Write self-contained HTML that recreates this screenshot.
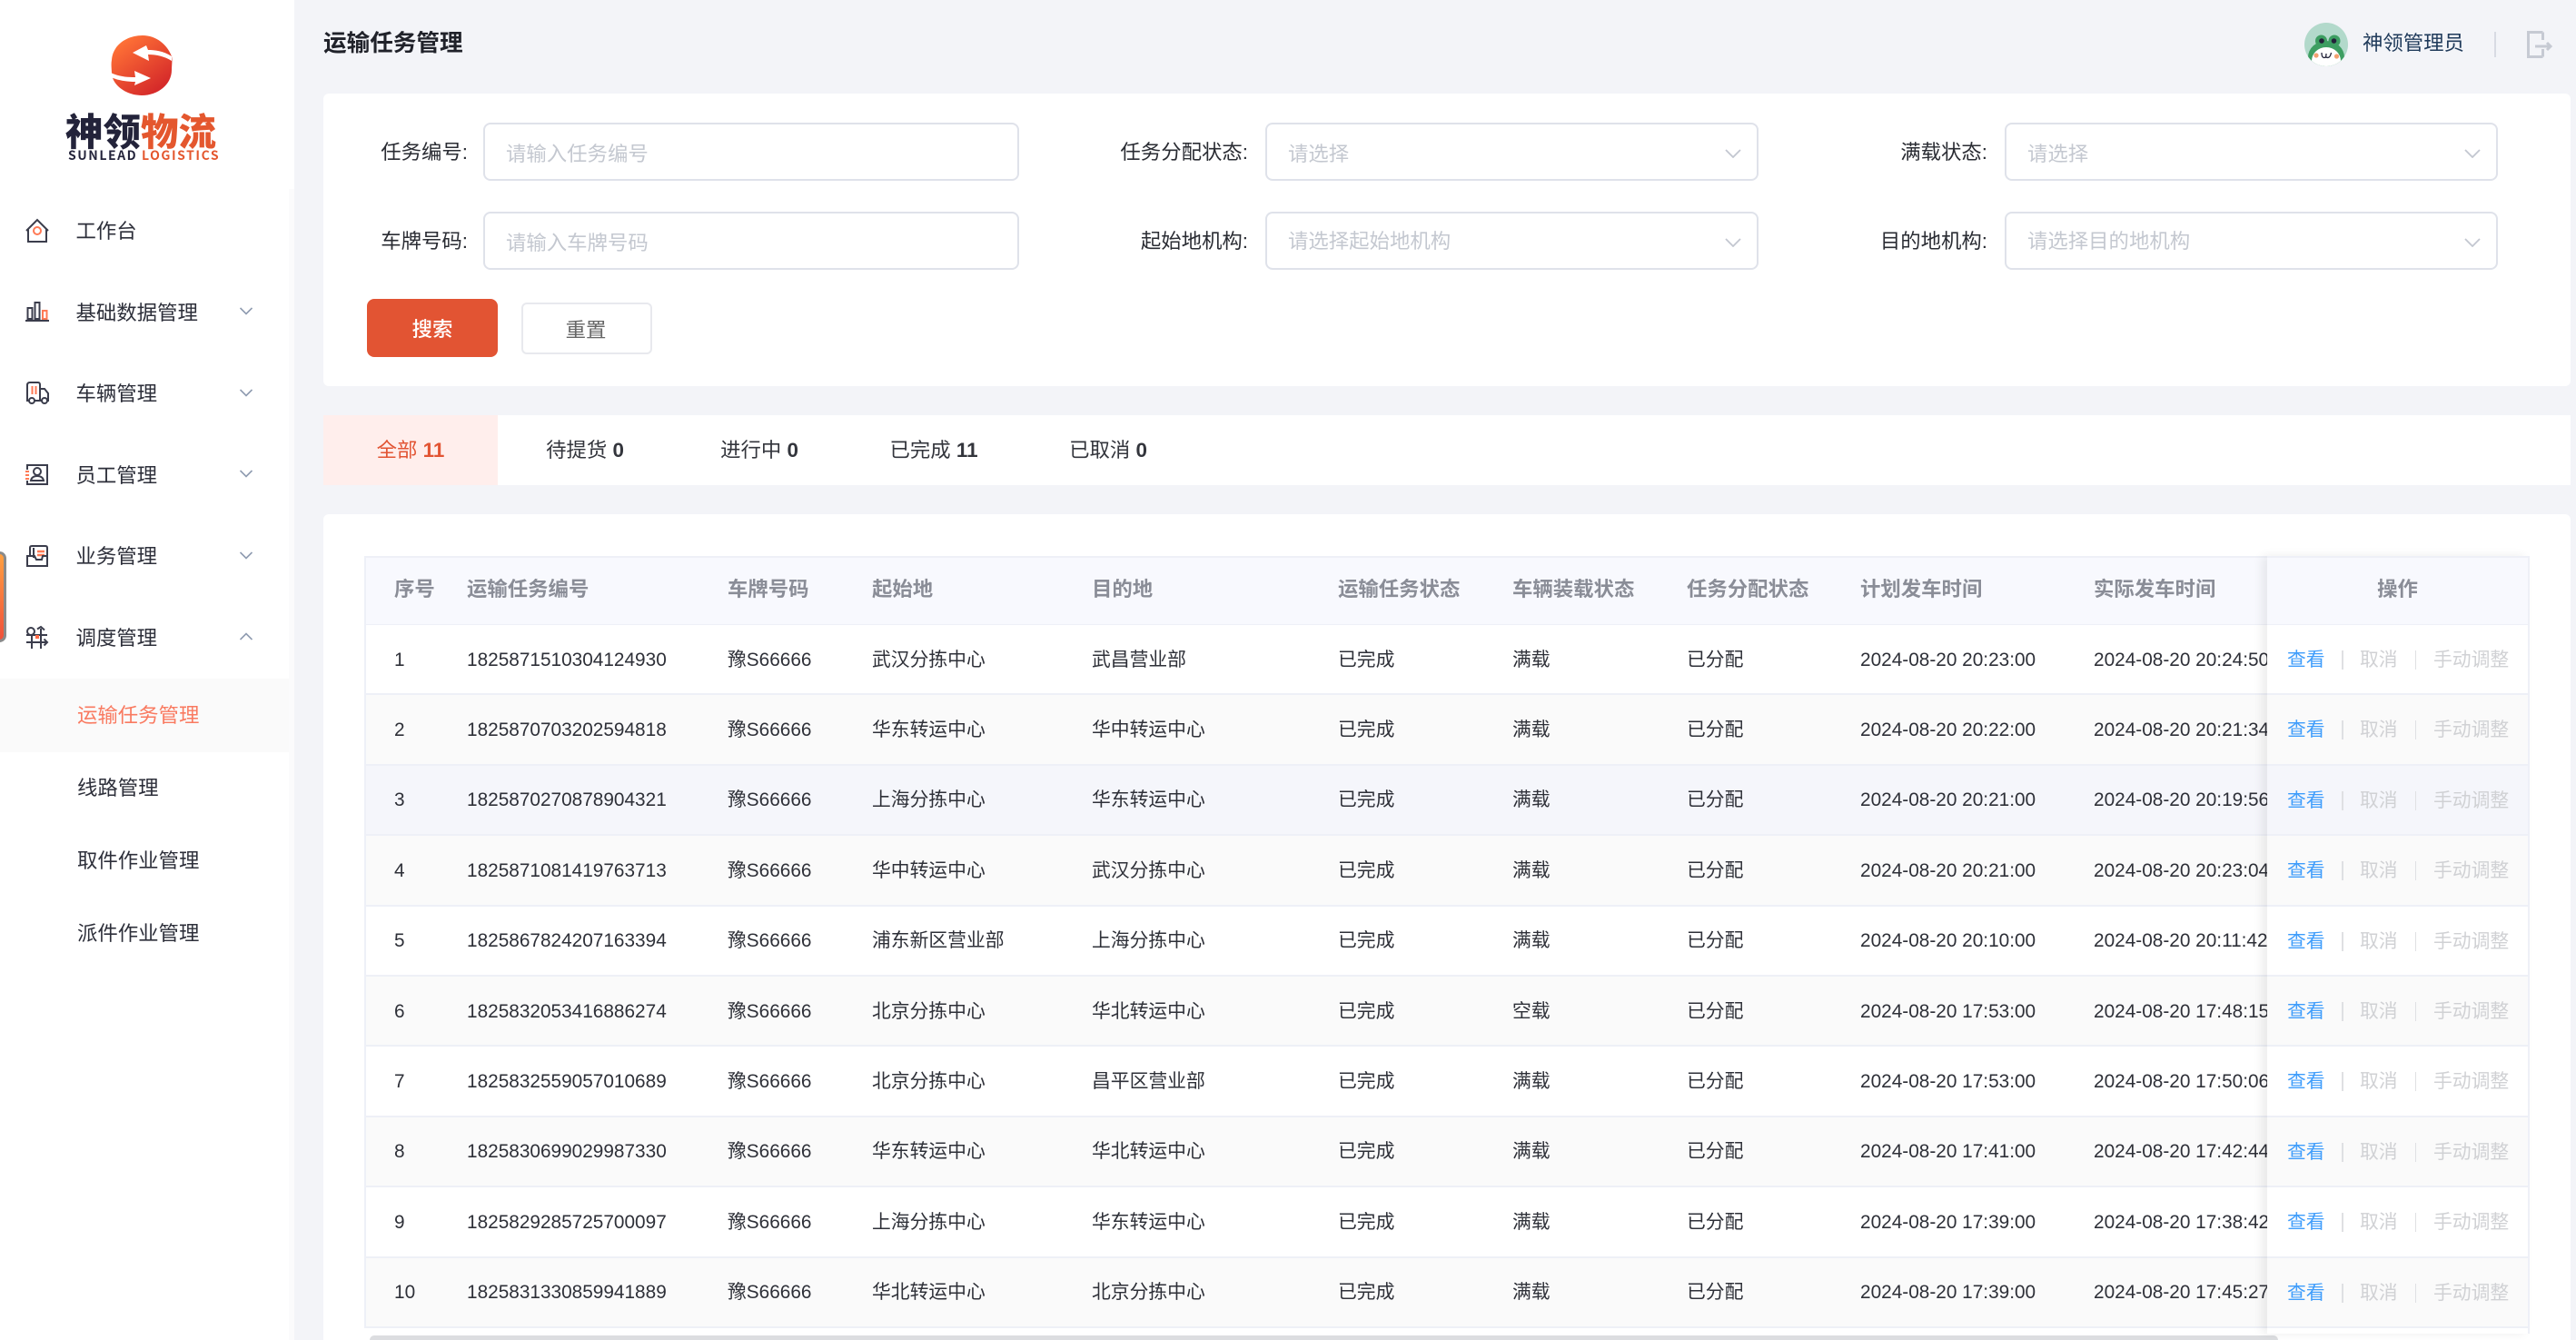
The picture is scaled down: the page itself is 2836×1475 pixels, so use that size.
<!DOCTYPE html>
<html lang="zh-CN"><head><meta charset="utf-8"><title>运输任务管理</title>
<style>
*{box-sizing:border-box}
html,body{margin:0;padding:0;width:2836px;height:1475px;overflow:hidden;background:#f3f4f8;font-family:"Liberation Sans","Noto Sans CJK SC",sans-serif;color:#2a2c33}
.a{position:absolute}
.t{position:absolute;white-space:nowrap;font-size:22.4px;height:40px;line-height:40px}
.card{position:absolute;background:#fff;border-radius:6px}
.in{position:absolute;background:#fff;border:2px solid #dfe2ea;border-radius:8px;height:64px}
.ph{color:#c4c8d0}
.lb{text-align:right;width:200px;color:#2a2c33}
.m{color:#2d2f3a;left:83.5px}
.s{color:#2d2f3a;left:85px}
.chev{position:absolute;fill:none;stroke:#8e9bb0;stroke-width:1.6}
.sel{position:absolute;fill:none;stroke:#c3c7d0;stroke-width:1.8}
.tab{position:absolute;top:457px;width:192px;height:77px;line-height:77px;text-align:center;font-size:22.4px;color:#33353c}
.tab b{font-weight:700}
.row,.hd{position:absolute;left:401px;width:2095px;display:grid;grid-template-columns:113px 287px 159px 242px 271px 192px 192px 191px 257px 191px;align-items:center;font-size:20.8px;color:#2e3038;white-space:nowrap;border-bottom:2px solid #eef0f7}
.row{padding-top:2px}
.row span,.hd span{line-height:40px;height:40px}
.row span{overflow:hidden}
.row span:first-child,.hd span:first-child{padding-left:33px}
.hd{top:612px;height:77px;background:#f8f9fe;border-top:2px solid #eef0f7;font-size:22.4px;font-weight:700;color:#8a8d97;padding-bottom:4px}
.w{background:#fff}.z{background:#fafafa}.h{background:#f5f6fb}
.fx{position:absolute;left:2496px;top:612px;width:289px;height:856px;background:#fff;box-shadow:-6px 0 10px rgba(0,0,0,.07);border-right:2px solid #eef0f7}
.fr{position:absolute;left:0;width:287px;height:77.4px;border-bottom:2px solid #eef0f7;font-size:20.8px;white-space:nowrap}
.fr i{font-style:normal;position:absolute;top:0;line-height:78px;color:#d0d1d4}
.fr i.v{left:22px;color:#3f9dfb}
.fr i.c{left:102px}
.fr i.g{left:183px}
.fr u{position:absolute;top:28px;height:21px;background:#dfe0e3}
.fr u.p{left:82px;width:2px}
.fr u.q{left:163px;width:1px}
</style></head><body>

<div class="a" style="left:0;top:0;width:324px;height:1475px;background:#fff"></div>
<div class="a" style="left:318px;top:208px;width:6px;height:1267px;background:#fbfbfc"></div>

<svg class="a" style="left:0;top:0" width="324" height="125" viewBox="0 0 324 125">
<defs><linearGradient id="lg" x1="0.15" y1="0.1" x2="0.75" y2="0.9"><stop offset="0" stop-color="#ff7236"/><stop offset="1" stop-color="#d62b2a"/></linearGradient></defs>
<path fill="url(#lg)" d="M123 66C124 50 139 39 157 39C172 39 184 49 189 62C190 66 189 72 189 77C189 93 174 105 156 105C139 105 124 94 123 81C123 76 122 71 123 66Z"/>
<path fill="#fff" d="M189 62C180 56 170 55 163 55L161 50L146 58L164 67L163 60C172 60 181 62 189 67Z"/>
<path fill="#fff" d="M122 80C130 84 139 85 149 85L148 78L166 86L148 94L149 90C138 90 129 88 122 85Z"/>
</svg>
<div class="t" style="left:72px;top:121px;height:42px;line-height:42px;font-size:41.5px;font-weight:900;color:#23233a;font-family:'Noto Sans CJK SC',sans-serif">神领<span style="color:#e4572e">物流</span></div>
<div class="t" style="left:75px;top:161px;height:20px;line-height:20px;font-size:14px;font-weight:700;letter-spacing:1.55px;color:#23233a;font-family:'Noto Sans CJK SC',sans-serif">SUNLEAD <span style="color:#e4572e">LOGISTICS</span></div>

<svg class="a" style="left:0;top:230px" width="70" height="500" viewBox="0 230 70 500" fill="none" stroke="#3b3d4c" stroke-width="2">
<path d="M29 254L41 242L53 254M31 252V266H51V252"/><circle cx="41" cy="254" r="4" stroke="#ff7a55"/>
<rect x="30.500" y="339" width="5" height="12"/><rect x="38.500" y="333" width="5" height="18"/><rect x="47" y="342" width="4.500" height="9" stroke="#ff7a55"/><path d="M28 353H54"/>
<path d="M32 441H30V424Q30 421 33 421H42Q44 421 44 424V441H38M44 428H49L53 433V441H52M44 441H46"/><circle cx="35" cy="441" r="3"/><circle cx="49" cy="441" r="3"/><path d="M35.500 425V434M39.500 425V434" stroke="#ff7a55"/>
<path d="M30 517V512H52V533H30V529"/><circle cx="41" cy="519" r="4"/><path d="M34 529Q35 524 41 524Q47 524 48 529Z"/><path d="M28 519H32M28 523H32M28 527H32" stroke="#ff7a55"/>
<path d="M33 612V603Q33 601 35 601H50Q52 601 52 603V612M37 603V614"/><path d="M41 607H49M41 611H49" stroke="#ff7a55" stroke-width="2.400"/><path d="M30 612H38L40 616H46L47 612H52V623H30Z"/>
<circle cx="34" cy="695" r="4"/><path d="M35 699V714M45 692V714M29 699H52M29 707H51M41 692.500L45 690L49 693.500M48.500 703.500L52 707L48.500 710.500"/><rect x="39" y="699" width="4" height="4" fill="#ff6a45" stroke="none"/>
</svg>

<div class="t m" style="top:235px">工作台</div>
<div class="t m" style="top:325px">基础数据管理</div>
<div class="t m" style="top:414px">车辆管理</div>
<div class="t m" style="top:504px">员工管理</div>
<div class="t m" style="top:593px">业务管理</div>
<div class="t m" style="top:683px">调度管理</div>
<svg class="chev" style="left:264px;top:338px" width="14" height="9"><path d="M0.500 1L7 7.500L13.500 1"/></svg>
<svg class="chev" style="left:264px;top:428px" width="14" height="9"><path d="M0.500 1L7 7.500L13.500 1"/></svg>
<svg class="chev" style="left:264px;top:517px" width="14" height="9"><path d="M0.500 1L7 7.500L13.500 1"/></svg>
<svg class="chev" style="left:264px;top:607px" width="14" height="9"><path d="M0.500 1L7 7.500L13.500 1"/></svg>
<svg class="chev" style="left:264px;top:696px" width="14" height="9"><path d="M0.500 8L7 1.500L13.500 8"/></svg>

<div class="a" style="left:0;top:747px;width:318px;height:81px;background:#fafafa"></div>
<div class="t s" style="top:768px;color:#f97a60">运输任务管理</div>
<div class="t s" style="top:848px">线路管理</div>
<div class="t s" style="top:928px">取件作业管理</div>
<div class="t s" style="top:1008px">派件作业管理</div>

<div class="a" style="left:-8px;top:607px;width:15px;height:100px;border:3px solid #8a8a8a;border-radius:8px;background:linear-gradient(#ffa040,#f0503a)"></div>

<div class="t" style="left:356px;top:28px;font-size:25.6px;font-weight:700;color:#20222a">运输任务管理</div>
<svg class="a" style="left:2537px;top:25px" width="48" height="48" viewBox="0 0 48 48">
<defs><clipPath id="cp"><circle cx="24" cy="24" r="24"/></clipPath></defs>
<g clip-path="url(#cp)"><rect width="48" height="48" fill="#b2d9cb"/>
<circle cx="18.500" cy="20" r="6.500" fill="#3d9e62"/><circle cx="33" cy="20" r="6.500" fill="#3d9e62"/>
<ellipse cx="24" cy="38" rx="20" ry="18" fill="#3d9e62"/><ellipse cx="24" cy="42" rx="16" ry="15" fill="#fff"/>
<circle cx="19" cy="20" r="2.800" fill="#23233a"/><circle cx="32.500" cy="20" r="2.800" fill="#23233a"/>
<circle cx="13" cy="36" r="2.600" fill="#f2a070"/><circle cx="35.500" cy="37" r="2.600" fill="#f2a070"/>
<path d="M19 33Q19 40 23.500 38Q24 36 24 34M24 38Q28 40 29.500 33" fill="none" stroke="#23233a" stroke-width="1.300"/></g></svg>
<div class="t" style="left:2601px;top:28px;color:#1f3a5a">神领管理员</div>
<div class="a" style="left:2746px;top:35px;width:2px;height:28px;background:#d8dbe3"></div>
<svg class="a" style="left:2780px;top:32px" width="32" height="34" fill="none" stroke="#c6cad3" stroke-width="3"><path d="M19.500 3.500H3.500V30.500H19.500M19.500 3.500V12M19.500 22V30.500"/><path d="M11 19H28M24 15L28 19L24 23"/></svg>

<div class="card" style="left:356px;top:103px;width:2474px;height:322px"></div>
<div class="t lb" style="left:315px;top:148px">任务编号:</div>
<div class="t lb" style="left:315px;top:246px">车牌号码:</div>
<div class="t lb" style="left:1174px;top:148px">任务分配状态:</div>
<div class="t lb" style="left:1174px;top:246px">起始地机构:</div>
<div class="t lb" style="left:1988px;top:148px">满载状态:</div>
<div class="t lb" style="left:1988px;top:246px">目的地机构:</div>
<div class="in" style="left:532px;top:135px;width:590px"></div>
<div class="in" style="left:532px;top:233px;width:590px"></div>
<div class="in" style="left:1393px;top:135px;width:543px"></div>
<div class="in" style="left:1393px;top:233px;width:543px"></div>
<div class="in" style="left:2207px;top:135px;width:543px"></div>
<div class="in" style="left:2207px;top:233px;width:543px"></div>
<div class="t ph" style="left:557px;top:150px">请输入任务编号</div>
<div class="t ph" style="left:557px;top:248px">请输入车牌号码</div>
<div class="t ph" style="left:1418px;top:150px">请选择</div>
<div class="t ph" style="left:1418px;top:246px">请选择起始地机构</div>
<div class="t ph" style="left:2232px;top:150px">请选择</div>
<div class="t ph" style="left:2232px;top:246px">请选择目的地机构</div>
<svg class="sel" style="left:1899px;top:164px" width="18" height="10"><path d="M1 1L9 9L17 1"/></svg>
<svg class="sel" style="left:1899px;top:262px" width="18" height="10"><path d="M1 1L9 9L17 1"/></svg>
<svg class="sel" style="left:2713px;top:164px" width="18" height="10"><path d="M1 1L9 9L17 1"/></svg>
<svg class="sel" style="left:2713px;top:262px" width="18" height="10"><path d="M1 1L9 9L17 1"/></svg>
<div class="a" style="left:404px;top:329px;width:144px;height:64px;background:#e25433;border-radius:8px;color:#fff;font-size:22.4px;font-weight:500;line-height:67px;text-align:center">搜索</div>
<div class="a" style="left:574px;top:333px;width:144px;height:57px;background:#fff;border:2px solid #e8e9ee;border-radius:6px;color:#666;font-size:22.4px;line-height:57px;text-align:center;padding-right:2px">重置</div>

<div class="a" style="left:356px;top:457px;width:2474px;height:77px;background:#fff"></div>
<div class="tab" style="left:356px;background:#ffeeec;color:#e25433">全部 <b>11</b></div>
<div class="tab" style="left:548px">待提货 <b>0</b></div>
<div class="tab" style="left:740px">进行中 <b>0</b></div>
<div class="tab" style="left:932px">已完成 <b>11</b></div>
<div class="tab" style="left:1124px">已取消 <b>0</b></div>

<div class="a" style="left:356px;top:566px;width:2474px;height:909px;background:#fff;border-radius:6px 6px 0 0"></div>

<div class="hd"><span>序号</span><span>运输任务编号</span><span>车牌号码</span><span>起始地</span><span>目的地</span><span>运输任务状态</span><span>车辆装载状态</span><span>任务分配状态</span><span>计划发车时间</span><span>实际发车时间</span></div>

<div class="row w" style="top:688px;height:77.4px"><span>1</span><span>1825871510304124930</span><span>豫S66666</span><span>武汉分拣中心</span><span>武昌营业部</span><span>已完成</span><span>满载</span><span>已分配</span><span>2024-08-20 20:23:00</span><span>2024-08-20 20:24:50</span></div>
<div class="row z" style="top:765.4px;height:77.4px"><span>2</span><span>1825870703202594818</span><span>豫S66666</span><span>华东转运中心</span><span>华中转运中心</span><span>已完成</span><span>满载</span><span>已分配</span><span>2024-08-20 20:22:00</span><span>2024-08-20 20:21:34</span></div>
<div class="row h" style="top:842.8px;height:77.4px"><span>3</span><span>1825870270878904321</span><span>豫S66666</span><span>上海分拣中心</span><span>华东转运中心</span><span>已完成</span><span>满载</span><span>已分配</span><span>2024-08-20 20:21:00</span><span>2024-08-20 20:19:56</span></div>
<div class="row z" style="top:920.2px;height:77.4px"><span>4</span><span>1825871081419763713</span><span>豫S66666</span><span>华中转运中心</span><span>武汉分拣中心</span><span>已完成</span><span>满载</span><span>已分配</span><span>2024-08-20 20:21:00</span><span>2024-08-20 20:23:04</span></div>
<div class="row w" style="top:997.6px;height:77.4px"><span>5</span><span>1825867824207163394</span><span>豫S66666</span><span>浦东新区营业部</span><span>上海分拣中心</span><span>已完成</span><span>满载</span><span>已分配</span><span>2024-08-20 20:10:00</span><span>2024-08-20 20:11:42</span></div>
<div class="row z" style="top:1075px;height:77.4px"><span>6</span><span>1825832053416886274</span><span>豫S66666</span><span>北京分拣中心</span><span>华北转运中心</span><span>已完成</span><span>空载</span><span>已分配</span><span>2024-08-20 17:53:00</span><span>2024-08-20 17:48:15</span></div>
<div class="row w" style="top:1152.4px;height:77.4px"><span>7</span><span>1825832559057010689</span><span>豫S66666</span><span>北京分拣中心</span><span>昌平区营业部</span><span>已完成</span><span>满载</span><span>已分配</span><span>2024-08-20 17:53:00</span><span>2024-08-20 17:50:06</span></div>
<div class="row z" style="top:1229.8px;height:77.4px"><span>8</span><span>1825830699029987330</span><span>豫S66666</span><span>华东转运中心</span><span>华北转运中心</span><span>已完成</span><span>满载</span><span>已分配</span><span>2024-08-20 17:41:00</span><span>2024-08-20 17:42:44</span></div>
<div class="row w" style="top:1307.2px;height:77.4px"><span>9</span><span>1825829285725700097</span><span>豫S66666</span><span>上海分拣中心</span><span>华东转运中心</span><span>已完成</span><span>满载</span><span>已分配</span><span>2024-08-20 17:39:00</span><span>2024-08-20 17:38:42</span></div>
<div class="row z" style="top:1384.6px;height:77.4px"><span>10</span><span>1825831330859941889</span><span>豫S66666</span><span>华北转运中心</span><span>北京分拣中心</span><span>已完成</span><span>满载</span><span>已分配</span><span>2024-08-20 17:39:00</span><span>2024-08-20 17:45:27</span></div>
<div class="a" style="left:401px;top:612px;width:2px;height:850px;background:#eef0f7"></div>

<div class="a" style="left:407px;top:1470px;width:2101px;height:5px;background:#dcdde0;border-radius:8px 8px 0 0"></div>

<div class="fx">
<div class="a" style="left:0;top:0;width:287px;height:77px;background:#f8f9fe;border-top:2px solid #eef0f7;border-bottom:2px solid #eef0f7;font-size:22.4px;font-weight:700;color:#8a8d97;text-align:center;line-height:69px">操作</div>
<div class="fr w" style="top:76px"><i class="v">查看</i><u class="p"></u><i class="c">取消</i><u class="q"></u><i class="g">手动调整</i></div>
<div class="fr z" style="top:153.4px"><i class="v">查看</i><u class="p"></u><i class="c">取消</i><u class="q"></u><i class="g">手动调整</i></div>
<div class="fr h" style="top:230.8px"><i class="v">查看</i><u class="p"></u><i class="c">取消</i><u class="q"></u><i class="g">手动调整</i></div>
<div class="fr z" style="top:308.2px"><i class="v">查看</i><u class="p"></u><i class="c">取消</i><u class="q"></u><i class="g">手动调整</i></div>
<div class="fr w" style="top:385.6px"><i class="v">查看</i><u class="p"></u><i class="c">取消</i><u class="q"></u><i class="g">手动调整</i></div>
<div class="fr z" style="top:463px"><i class="v">查看</i><u class="p"></u><i class="c">取消</i><u class="q"></u><i class="g">手动调整</i></div>
<div class="fr w" style="top:540.4px"><i class="v">查看</i><u class="p"></u><i class="c">取消</i><u class="q"></u><i class="g">手动调整</i></div>
<div class="fr z" style="top:617.8px"><i class="v">查看</i><u class="p"></u><i class="c">取消</i><u class="q"></u><i class="g">手动调整</i></div>
<div class="fr w" style="top:695.2px"><i class="v">查看</i><u class="p"></u><i class="c">取消</i><u class="q"></u><i class="g">手动调整</i></div>
<div class="fr z" style="top:772.6px"><i class="v">查看</i><u class="p"></u><i class="c">取消</i><u class="q"></u><i class="g">手动调整</i></div>
</div>
</body></html>
